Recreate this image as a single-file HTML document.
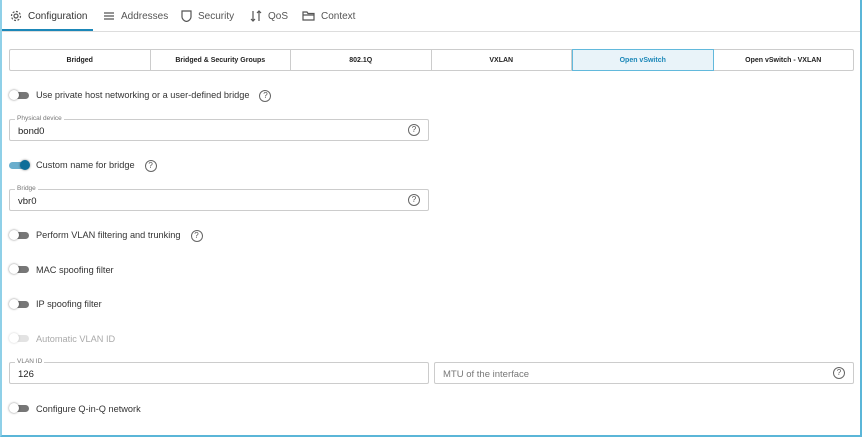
<!DOCTYPE html><html><head><style>
*{box-sizing:border-box;margin:0;padding:0}
body{width:864px;height:438px;background:#fff;font-family:"Liberation Sans",sans-serif;color:#333;position:relative;overflow:hidden}
.frame{position:absolute;left:0;top:0;width:862px;height:437px;border-left:2px solid #8fd0e8;border-right:2px solid #5bb6d8;border-bottom:2px solid #5bb6d8}
.tabs{position:absolute;left:0;top:0;width:860px;height:32px;border-bottom:1px solid #ddd}
.tab{position:absolute;top:10px;font-size:10px;color:#555;display:flex;align-items:center;gap:6px}
.tab svg{stroke:#555;fill:none;stroke-width:1.2}
.act{position:absolute;left:0;top:29px;width:93px;height:2px;background:#1b87b8}
.seg{position:absolute;left:9px;top:49px;width:845px;height:22px;border:1px solid #ccc;border-radius:2px;display:flex}
.seg div{flex:1;font-size:7px;text-align:center;line-height:21px;border-right:1px solid #ccc;color:#222;font-weight:bold;font-weight:600}
.seg div:last-child{border-right:none}
.seg .on{background:#e9f3f9;border:1px solid #62b9dc;color:#1b87b8;margin:-1px 0}
.tg{position:absolute;left:9px;width:20px;height:10px}
.tg .tr{position:absolute;left:3px;top:2px;width:17px;height:7px;border-radius:4px;background:#777}
.tg .kn{position:absolute;left:0;top:0;width:10px;height:10px;border-radius:5px;background:#fff;box-shadow:0 0 2px rgba(0,0,0,.5)}
.lab{position:absolute;left:36px;font-size:9.2px;color:#333;line-height:12px}
.q{display:inline-block;width:12px;height:12px;border:1px solid #666;border-radius:50%;font-size:8px;text-align:center;line-height:10px;color:#555;vertical-align:middle;margin-left:10px}
.in{position:absolute;height:22px;border:1px solid #ccc;border-radius:2px;font-size:9.5px;padding:6px 8px;color:#222}
.in .l{position:absolute;left:5px;top:-5px;font-size:6.5px;color:#777;background:#fff;padding:0 2px;line-height:8px}
.in .q{position:absolute;right:8px;top:4px;margin:0}
</style></head><body>
<div class="tabs">
<div class="tab" style="left:10px;color:#333"><svg width="12" height="12" viewBox="0 0 12 12"><circle cx="6" cy="6" r="2"/><circle cx="6" cy="6" r="4.5" stroke-dasharray="2 1.5"/></svg>Configuration</div>
<div class="tab" style="left:103px"><svg width="12" height="12" viewBox="0 0 12 12"><path d="M1 3h10M1 6h10M1 9h10"/></svg>Addresses</div>
<div class="tab" style="left:181px"><svg width="11" height="12" viewBox="0 0 11 12"><path d="M1 1h9v6c0 2-2 4-4.5 4.5C3 11 1 9 1 7z"/></svg>Security</div>
<div class="tab" style="left:250px"><svg width="12" height="12" viewBox="0 0 12 12"><path d="M3 1v10M1 9l2 2 2-2M9 11V1M7 3l2-2 2 2"/></svg>QoS</div>
<div class="tab" style="left:302px"><svg width="13" height="12" viewBox="0 0 13 12"><path d="M1 2h4l1 1.5h6V10H1zM1 5h11"/></svg>Context</div>
<div class="act"></div></div>
<div class="seg"><div>Bridged</div><div>Bridged &amp; Security Groups</div><div>802.1Q</div><div>VXLAN</div><div class="on">Open vSwitch</div><div>Open vSwitch - VXLAN</div></div>

<div class="tg" style="top:90px"><div class="tr"></div><div class="kn"></div></div><div class="lab" style="top:89px">Use private host networking or a user-defined bridge<span class="q">?</span></div>
<div class="in" style="left:9px;top:119px;width:420px"><span class="l">Physical device</span>bond0<span class="q">?</span></div>

<div class="tg" style="top:160px"><div class="tr" style="background:#6aaecd;left:0;width:18px"></div><div class="kn" style="left:11px;background:#0f6e99"></div></div><div class="lab" style="top:159px">Custom name for bridge<span class="q">?</span></div>
<div class="in" style="left:9px;top:189px;width:420px"><span class="l">Bridge</span>vbr0<span class="q">?</span></div>

<div class="tg" style="top:230px"><div class="tr"></div><div class="kn"></div></div><div class="lab" style="top:229px">Perform VLAN filtering and trunking<span class="q">?</span></div>
<div class="tg" style="top:264px"><div class="tr"></div><div class="kn"></div></div><div class="lab" style="top:264px">MAC spoofing filter</div>
<div class="tg" style="top:299px"><div class="tr"></div><div class="kn"></div></div><div class="lab" style="top:298px">IP spoofing filter</div>
<div class="tg" style="top:333px;opacity:.4"><div class="tr" style="background:#bbb"></div><div class="kn"></div></div><div class="lab" style="top:333px;color:#aaa">Automatic VLAN ID</div>
<div class="in" style="left:9px;top:362px;width:420px"><span class="l">VLAN ID</span>126</div>
<div class="in" style="left:434px;top:362px;width:420px;color:#777">MTU of the interface<span class="q">?</span></div>
<div class="tg" style="top:403px"><div class="tr"></div><div class="kn"></div></div><div class="lab" style="top:403px">Configure Q-in-Q network</div>
<div class="frame"></div>
</body></html>
